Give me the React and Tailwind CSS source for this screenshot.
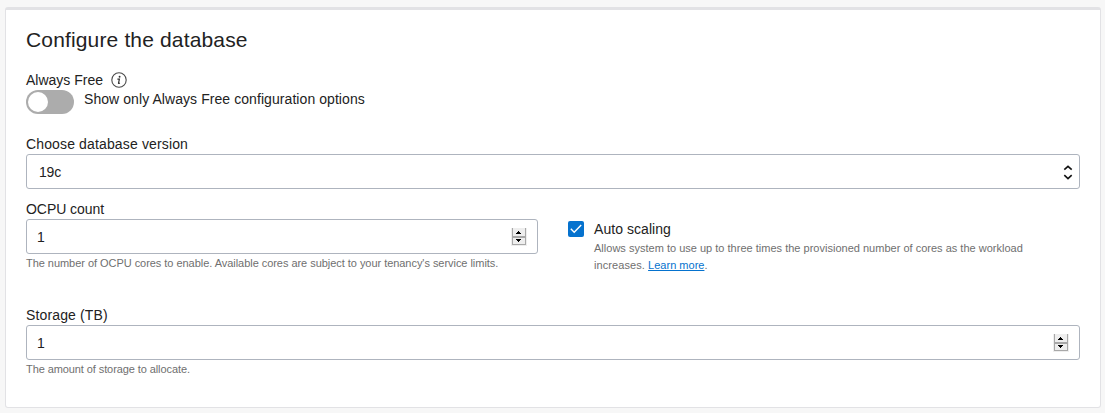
function Spinner() {
  return (
    <svg className="h-[18px] w-4 shrink-0" viewBox="0 0 16 18" shapeRendering="crispEdges" aria-hidden="true">
      <rect width="16" height="18" fill="#eeeeee" />
      <rect x="1" y="0" width="14" height="17" fill="#a8a8a8" />
      <rect x="2" y="0" width="12" height="8" fill="#eeeeee" />
      <rect x="2" y="10" width="12" height="6" fill="#eeeeee" />
      <path d="M7 3h1v1h1v1h1v1H5V5h1V4h1zM5 11h5v1H9v1H8v1H7v-1H6v-1H5z" fill="#000" />
    </svg>
  );
}

function NumberField({ label, labelClass, help, helpClass }) {
  return (
    <div>
      <div className={`h-[18px] leading-[18px] ${labelClass}`}>{label}</div>
      <div className="mt-px flex h-[35px] items-center justify-between rounded-[3px] border border-[#aeb4be] pl-[10px] pr-[10px]">
        <span className="pt-[2px]">1</span>
        <Spinner />
      </div>
      <div className={`mt-px h-[17px] whitespace-nowrap text-[11px] leading-[17px] text-[#6f6f6f] ${helpClass}`}>{help}</div>
    </div>
  );
}

export default function App() {
  return (
    <div className="h-[413px] w-[1105px] bg-[#f7f7f7] pl-[5px] pt-[7px] font-['Liberation_Sans',Arial,sans-serif] text-[14px] tracking-[0.14px] text-[#222222]">
      <section className="flex h-[401px] w-[1096px] flex-col rounded-[3px] border border-t-[3px] border-[#e2e2e5] bg-white px-5">
        <h2 className="mt-[16px] h-7 text-[21px] leading-7 tracking-[0.15px]">Configure the database</h2>
        <div className="mt-[17px] flex h-[18px] items-center">
          <span className="w-[85px] leading-[18px] tracking-[0px]">Always Free</span>
          <svg className="size-4" viewBox="0 0 16 16" fill="none" aria-hidden="true">
            <circle cx="8" cy="8" r="7.2" stroke="#4a4a4a" strokeWidth="1.1" />
            <circle cx="8.6" cy="4.8" r="0.95" fill="#333" />
            <path d="M6.4 7.2h2L7.5 11q-.1.6.4.5l1-.5" stroke="#333" strokeWidth="1.2" />
          </svg>
        </div>
        <div className="mt-[1px] flex h-6 gap-[10px]">
          <div className="h-6 w-12 rounded-full bg-[#acacac] p-[2px]">
            <div className="size-5 rounded-full bg-white" />
          </div>
          <span className="h-[18px] leading-[18px] tracking-[0.07px]">Show only Always Free configuration options</span>
        </div>
        <div className="mt-[21px] h-[18px] leading-[18px]">Choose database version</div>
        <div className="mt-px flex h-[35px] shrink-0 items-center justify-between rounded-[3px] border border-[#aeb4be] pl-[12px] pr-[6px]">
          <span className="pt-[2px] tracking-[-0.2px]">19c</span>
          <svg className="h-4 w-[10px]" viewBox="0 0 10 16" fill="none" stroke="#111" strokeWidth="1.6" aria-hidden="true">
            <path d="M1.3 5.7 5 2.3l3.7 3.4M1.3 11.2 5 14.6l3.7-3.4" />
          </svg>
        </div>
        <div className="mt-[11px] flex h-[106px] gap-[30px]">
          <div className="w-[512px]">
            <NumberField
              label="OCPU count"
              labelClass="tracking-[-0.05px]"
              help="The number of OCPU cores to enable. Available cores are subject to your tenancy's service limits."
              helpClass="tracking-[-0.042px]"
            />
          </div>
          <div className="flex gap-[10px] pt-5">
            <svg className="mt-px size-4" viewBox="0 0 16 16" fill="none" aria-hidden="true">
              <rect width="16" height="16" rx="2" fill="#0572ce" />
              <path d="M2.8 7.8 6.2 11.3 13.2 4" stroke="#fff" strokeWidth="1.4" />
            </svg>
            <div>
              <div className="h-[18px] leading-[18px] tracking-[0.05px]">Auto scaling</div>
              <p className="mt-[2px] whitespace-nowrap text-[11px] leading-[17px] tracking-[0.01px] text-[#6f6f6f]">
                Allows system to use up to three times the provisioned number of cores as the workload
                <br />
                <span className="tracking-[0.08px]">increases. </span>
                <a className="text-[#0572ce] underline">Learn more</a>.
              </p>
            </div>
          </div>
        </div>
        <NumberField
          label="Storage (TB)"
          labelClass="tracking-[0.14px]"
          help="The amount of storage to allocate."
          helpClass="tracking-[-0.09px]"
        />
      </section>
    </div>
  );
}
